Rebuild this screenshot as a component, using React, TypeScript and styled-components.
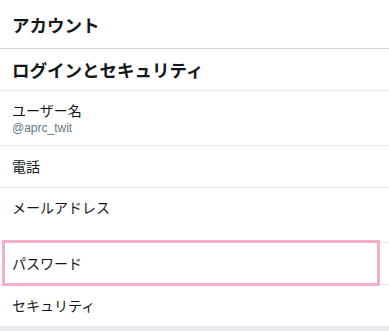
import { createGlobalStyle } from 'styled-components';
import styled from 'styled-components';

const GlobalStyle = createGlobalStyle`
  html, body {
    margin: 0;
    padding: 0;
    background: #fff;
  }
  body {
    font-family: 'Noto Sans CJK JP', 'Noto Sans', sans-serif;
    color: #14171a;
  }
`;

const Page = styled.div`
  width: 389px;
  display: flex;
  flex-direction: column;
`;

const Header = styled.div`
  height: 48px;
  padding: 0 12px;
  display: flex;
  align-items: center;
  border-bottom: 1px solid #d2d4d6;
  font-size: 17.5px;
  font-weight: 700;
`;

const SectionTitle = styled.div`
  height: 41px;
  padding: 0 12px;
  display: flex;
  align-items: center;
  border-bottom: 1px solid #e7e9eb;
  font-size: 17.5px;
  font-weight: 700;
`;

const Row = styled.div<{ $twoLine?: boolean; $last?: boolean }>`
  position: relative;
  display: flex;
  flex-direction: column;
  padding: ${(p) => (p.$twoLine ? '9px 12px' : '10px 12px')};
  border-bottom: ${(p) => (p.$last ? 'none' : '1px solid #e7e9eb')};
`;

const Label = styled.div<{ $twoLine?: boolean }>`
  font-size: 14px;
  line-height: ${(p) => (p.$twoLine ? '20px' : '21px')};
  color: #14171a;
`;

const Sub = styled.div`
  height: 16px;
  font-family: 'Liberation Sans', Arial, sans-serif;
  font-size: 12px;
  line-height: 16px;
  color: #657786;
`;

// annotation frame drawn over the password row
const Highlight = styled.span`
  position: absolute;
  left: 2px;
  right: 9px;
  top: -3px;
  bottom: -2px;
  border: 3px solid #f4aec9;
  pointer-events: none;
`;

const Band = styled.div`
  height: 10px;
  background: #e6ecf0;
`;

type Item = {
  label: string;
  sub?: string;
  highlight?: boolean;
};

const items: Item[] = [
  { label: 'ユーザー名', sub: '@aprc_twit' },
  { label: '電話' },
  { label: 'メールアドレス', sub: '' },
  { label: 'パスワード', highlight: true },
  { label: 'セキュリティ' },
];

export default function App() {
  return (
    <Page>
      <GlobalStyle />
      <Header>アカウント</Header>
      <SectionTitle>ログインとセキュリティ</SectionTitle>
      {items.map((it, i) => {
        const twoLine = it.sub !== undefined;
        return (
          <Row key={it.label} $twoLine={twoLine} $last={i === items.length - 1}>
            <Label $twoLine={twoLine}>{it.label}</Label>
            {twoLine && <Sub>{it.sub}</Sub>}
            {it.highlight && <Highlight />}
          </Row>
        );
      })}
      <Band />
    </Page>
  );
}
